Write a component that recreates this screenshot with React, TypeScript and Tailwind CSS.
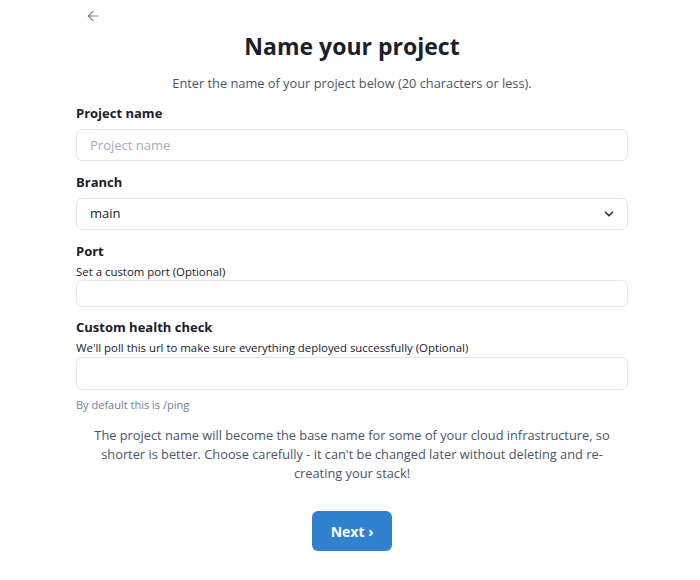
import { ArrowLeft, ChevronDown } from 'lucide-react';

const labelClass = 'block text-[13px] font-bold leading-[20px] text-[#1a202c]';
const helperClass = 'text-[11.4px] leading-[16px] text-[#1a202c]';
const inputClass =
  'block w-full rounded-md border border-[#e2e8f0] bg-white px-[13px] text-[13px] text-[#1a202c] outline-none placeholder:text-[#a0aec0]';

export default function App() {
  return (
    <div className="min-h-[580px] w-full bg-white font-['Open_Sans',sans-serif]">
      <div className="ml-[76px] w-[552px]">
        <div className="flex h-[32px] items-center pl-[9px] text-[#718096]">
          <ArrowLeft size={16} strokeWidth={1.75} />
        </div>

        <h1 className="text-center text-[23px] font-bold leading-[28px] text-[#1a202c]">Name your project</h1>
        <p className="mt-[13px] text-center text-[12.8px] leading-[20px] text-[#4a5568]">
          Enter the name of your project below (20 characters or less).
        </p>

        <form className="mt-[10px]">
          <label className={labelClass}>Project name</label>
          <input className={`${inputClass} mt-[6px] h-[32px]`} placeholder="Project name" />

          <label className={`${labelClass} mt-[11px]`}>Branch</label>
          <div className="relative mt-[6px]">
            <select className={`${inputClass} h-[32px] appearance-none`} defaultValue="main">
              <option value="main">main</option>
            </select>
            <ChevronDown
              size={14}
              strokeWidth={3}
              className="pointer-events-none absolute right-[12px] top-1/2 -translate-y-1/2 text-[#2d3748]"
            />
          </div>

          <label className={`${labelClass} mt-[11px]`}>Port</label>
          <p className={`${helperClass} mt-[3px]`}>Set a custom port (Optional)</p>
          <input className={`${inputClass} mt-[0px] h-[27px]`} />

          <label className={`${labelClass} mt-[10px]`}>Custom health check</label>
          <p className={`${helperClass} mt-[3px]`}>
            We'll poll this url to make sure everything deployed successfully (Optional)
          </p>
          <input className={`${inputClass} mt-[1px] h-[33px]`} />
          <p className="mt-[7px] text-[11px] leading-[16px] text-[#718096]">By default this is /ping</p>
        </form>

        <p className="mx-auto mt-[13px] w-[530px] text-center text-[12.8px] leading-[19px] text-[#4a5568]">
          The project name will become the base name for some of your cloud infrastructure, so shorter is better.
          Choose carefully - it can't be changed later without deleting and re-creating your stack!
        </p>

        <div className="mt-[28px] flex justify-center">
          <button
            type="button"
            className="h-[40px] w-[80px] rounded-md bg-[#3182ce] text-[14px] font-bold text-white"
          >
            Next ›
          </button>
        </div>
      </div>
    </div>
  );
}
